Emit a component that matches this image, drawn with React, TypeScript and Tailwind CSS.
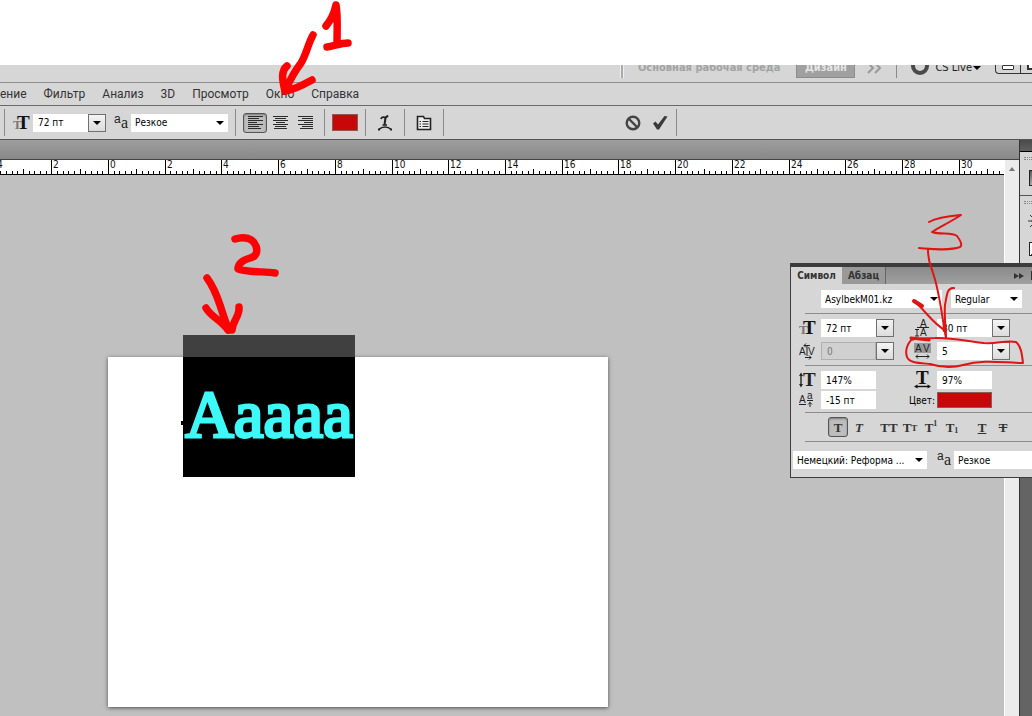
import type { ReactNode } from "react";
import clsx from "clsx";

const UI_FONT = "font-['DejaVu_Sans_Condensed','DejaVu_Sans',sans-serif]";

const menuItems = ["ение", "Фильтр", "Анализ", "3D", "Просмотр", "Окно", "Справка"];

// Distance between two whole units on the ruler
const UNIT = 28.36;
const RULER_ZERO = 108;

function Serif({
  x,
  y,
  size,
  children,
  fill = "#222",
  weight = 700,
}: {
  x: number;
  y: number;
  size: number;
  children: string;
  fill?: string;
  weight?: number;
}) {
  return (
    <text x={x} y={y} fontSize={size} fontWeight={weight} fill={fill} fontFamily="Liberation Serif, serif">
      {children}
    </text>
  );
}

function Sans({ x, y, size, children }: { x: number; y: number; size: number; children: string }) {
  return (
    <text x={x} y={y} fontSize={size} fill="#222" fontFamily="Liberation Sans, sans-serif">
      {children}
    </text>
  );
}

function Glyph({ children, w = 17 }: { children: ReactNode; w?: number }) {
  return (
    <svg width={w} height="18" viewBox={`0 0 ${w} 18`} fill="none" className="shrink-0" aria-hidden="true">
      {children}
    </svg>
  );
}

function SizeGlyph() {
  return (
    <Glyph>
      <Serif x={0} y={15} size={13} fill="#777">T</Serif>
      <Serif x={4} y={15} size={19} fill="#111">T</Serif>
    </Glyph>
  );
}

function AntialiasGlyph() {
  return (
    <Glyph w={15}>
      <Sans x={0} y={9} size={12}>a</Sans>
      <Serif x={7} y={14} size={16} weight={400}>a</Serif>
    </Glyph>
  );
}

function Arrow() {
  return (
    <svg width="8" height="4" viewBox="0 0 8 4" aria-hidden="true">
      <path d="M0 0h8L4 4z" fill="#000" />
    </svg>
  );
}

function Combo({ label, value, disabled = false }: { label: string; value: string; disabled?: boolean }) {
  return (
    <div className="flex h-[18px] w-[73px]">
      <input
        aria-label={label}
        defaultValue={value}
        disabled={disabled}
        className={clsx(
          "min-w-0 flex-1 px-[5px] text-[10px]",
          disabled ? "border border-[#b0b0b0] bg-[#d0d0d0] text-[#777]" : "bg-white text-black",
        )}
      />
      <button
        type="button"
        aria-label={`${label}: список`}
        className="flex w-[18px] items-center justify-center border border-[#707070] bg-linear-to-b from-[#f4f4f4] to-[#dcdcdc]"
      >
        <Arrow />
      </button>
    </div>
  );
}

function Field({ label, value }: { label: string; value: string }) {
  return (
    <input
      aria-label={label}
      defaultValue={value}
      className="h-[18px] w-[55px] bg-white px-[5px] text-[10px] text-black"
    />
  );
}

function Select({ label, value, className }: { label: string; value: string; className: string }) {
  return (
    <div className={clsx("relative h-[18px] shrink-0 bg-white", className)}>
      <select
        aria-label={label}
        className="block h-full w-full appearance-none bg-transparent pl-1 text-[10px] text-black"
      >
        <option>{value}</option>
      </select>
      <span className="pointer-events-none absolute inset-y-0 right-1 flex items-center">
        <Arrow />
      </span>
    </div>
  );
}

function Separator() {
  return <span className="mx-[7px] h-[27px] w-px shrink-0 bg-[#8a8a8a]" />;
}

function ToolButton({ label, pressed = false, children }: { label: string; pressed?: boolean; children: ReactNode }) {
  return (
    <button
      type="button"
      aria-label={label}
      aria-pressed={pressed}
      className={clsx(
        "flex h-5 w-6 shrink-0 items-center justify-center rounded-[3px]",
        pressed && "border border-[#555] bg-[#bdbdbd] shadow-[inset_0_1px_2px_rgba(0,0,0,0.35)]",
      )}
    >
      {children}
    </button>
  );
}

function AlignLines({ align }: { align: "left" | "center" | "right" }) {
  const widths = [15, 11, 15, 9, 15, 11, 13];
  return (
    <svg width="15" height="14" viewBox="0 0 15 14" aria-hidden="true">
      {widths.map((w, i) => {
        const x = align === "left" ? 0 : align === "right" ? 15 - w : (15 - w) / 2;
        return <rect key={i} x={x} y={i * 2} width={w} height="1" fill="#2a2a2a" />;
      })}
    </svg>
  );
}

function ApplicationBar() {
  return (
    <div className="flex h-[17px] items-end justify-end overflow-hidden bg-[#d6d6d6] text-[11px]">
      <span className="mr-[14px] mb-1 h-6 w-[4px] border-x border-[#efefef] bg-[#aaa]" />
      <button type="button" className="mb-1 h-6 leading-[28px] font-bold whitespace-nowrap text-[#a3a3a3]">
        Основная рабочая среда
      </button>
      <button
        type="button"
        className="mb-1 ml-4 h-6 w-[59px] border border-[#8c8c8c] bg-[#a0a0a0] leading-[26px] font-bold text-[#e4e4e4]"
      >
        Дизайн
      </button>
      <button type="button" aria-label="Другие среды" className="mb-1 ml-3 h-6 pt-1">
        <svg width="15" height="14" viewBox="0 0 15 14" fill="none" stroke="#9a9a9a" strokeWidth="2">
          <path d="M1 2l5 5-5 5M8 2l5 5-5 5" />
        </svg>
      </button>
      <span className="mx-[14px] mb-1 h-6 w-px bg-[#8a8a8a]" />
      <button type="button" className="mb-1 flex h-6 items-center gap-[6px] pt-1 text-[#222]">
        <svg width="18" height="22" viewBox="0 0 18 22" fill="none" aria-hidden="true">
          <circle cx="9" cy="9" r="7" stroke="#4a4a4a" strokeWidth="4" />
        </svg>
        <span className="flex items-center gap-px whitespace-nowrap">
          CS Live
          <Arrow />
        </span>
      </button>
      <div className="mb-2 ml-[14px] flex h-6 w-[37px] shrink-0 overflow-hidden rounded-bl border border-r-0 border-[#333]">
        <button type="button" aria-label="Свернуть" className="flex w-[25px] shrink-0 items-end justify-center border-r border-[#333] pb-[3px]">
          <span className="h-[5px] w-3 rounded-[1px] border border-[#333] bg-white" />
        </button>
        <button type="button" aria-label="Развернуть" className="flex w-[25px] shrink-0 items-end pb-[3px] pl-[6px]">
          <span className="h-[9px] w-3 border-2 border-[#333] bg-white" />
        </button>
      </div>
    </div>
  );
}

function OptionsBar() {
  return (
    <div className="flex h-[33px] items-center overflow-hidden bg-[#d6d6d6] pl-1">
      <span className="mr-2 h-[27px] w-px shrink-0 bg-[#8a8a8a]" />
      <SizeGlyph />
      <div className="ml-[3px] shrink-0">
        <Combo label="Кегль" value="72 пт" />
      </div>
      <div className="mr-[2px] ml-2">
        <AntialiasGlyph />
      </div>
      <Select label="Сглаживание" value="Резкое" className="w-[97px]" />
      <Separator />
      <div className="flex gap-px">
        <ToolButton label="По левому краю" pressed>
          <AlignLines align="left" />
        </ToolButton>
        <ToolButton label="По центру">
          <AlignLines align="center" />
        </ToolButton>
        <ToolButton label="По правому краю">
          <AlignLines align="right" />
        </ToolButton>
      </div>
      <Separator />
      <button
        type="button"
        aria-label="Цвет текста"
        className="h-[17px] w-[26px] shrink-0 border border-[#8a5a5a] bg-[#c80808]"
      />
      <Separator />
      <ToolButton label="Деформация текста">
        <svg width="16" height="18" viewBox="0 0 16 18" fill="none" stroke="#222" aria-hidden="true">
          <path d="M4 5C5 2.500 6 3 8 3.500C10 3.500 10.500 2 11 1.500" strokeWidth="2" />
          <path d="M8.500 3.500L7.500 11" strokeWidth="2" />
          <path d="M5.500 11h4.500" strokeWidth="1.500" />
          <path d="M2 15.500C5 12 11 12 14 15.500" strokeWidth="1.500" />
          <path d="M1 14.500h2v2h-2zM13 14.500h2v2h-2z" fill="#222" stroke="none" />
        </svg>
      </ToolButton>
      <Separator />
      <ToolButton label="Палитры">
        <svg width="16" height="16" viewBox="0 0 16 16" fill="none" stroke="#222" aria-hidden="true">
          <path d="M1.500 1.500h6l1 2h6v11h-13z" fill="#eee" strokeWidth="1.600" />
          <path d="M3.500 6.500h1.500M3.500 9h1.500M3.500 11.500h1.500M6.500 6.500h6M6.500 9h6M6.500 11.500h6" />
        </svg>
      </ToolButton>
      <Separator />
      <div className="ml-[170px] flex gap-[3px]">
        <ToolButton label="Отменить">
          <svg width="16" height="16" viewBox="0 0 16 16" fill="none" stroke="#444" strokeWidth="2.400" aria-hidden="true">
            <circle cx="8" cy="8" r="6.300" />
            <path d="M3.500 3.500l9 9" />
          </svg>
        </ToolButton>
        <ToolButton label="Применить">
          <svg width="16" height="16" viewBox="0 0 16 16" fill="#3a3a3a" aria-hidden="true">
            <path d="M1 8.500L3.500 6.500L6 9.500L12.500 1L15.500 1.500L7 14.500H5z" />
          </svg>
        </ToolButton>
      </div>
      <span className="ml-1 h-[27px] w-px shrink-0 bg-[#8a8a8a]" />
    </div>
  );
}

function Ruler() {
  const ticks = Array.from({ length: 360 }, (_, i) => i - 20);
  return (
    <svg width="100%" height="15" className="block border-b border-black bg-white" aria-hidden="true">
      {ticks.map((t) => {
        const x = Math.round(RULER_ZERO + (t * UNIT) / 5);
        const major = t % 10 === 0;
        const height = major ? 15 : t % 5 === 0 ? 5 : 3;
        return (
          <g key={t}>
            <rect x={x} y={14 - height} width="1" height={height} fill="#000" />
            {major && (
              <text x={x + 2} y="8" fontSize="10" fill="#111" fontFamily="DejaVu Sans Condensed, DejaVu Sans, sans-serif">
                {Math.abs(t / 5)}
              </text>
            )}
          </g>
        );
      })}
    </svg>
  );
}

function Artboard() {
  return (
    <div className="pt-[182px] pl-[108px]">
      <div className="relative h-[350px] w-[500px] bg-white shadow-[0_1px_4px_rgba(0,0,0,0.6)]">
        {/* selected type layer, sticking out over the top edge of the page */}
        <div className="absolute -top-[22px] left-[75px] h-[142px] w-[172px] bg-linear-to-b from-[#404040] from-[22px] to-black to-[22px]">
          <p className="pt-11 text-center font-['Liberation_Serif',serif] text-[67px] leading-[70px] text-[#3ff8f8] [-webkit-text-stroke:3px_#3ff8f8]">
            Aaaaa
          </p>
          <span className="absolute top-[86px] -left-[2px] h-1 w-1 bg-black" />
        </div>
      </div>
    </div>
  );
}

function Dock() {
  return (
    <aside className="flex w-[13px] shrink-0 flex-col overflow-hidden border-l border-[#333] bg-[#646464]">
      <div className="h-3 border-b border-black bg-linear-to-b from-[#4a4a4a] to-[#606060]" />
      <div className="h-[44px] border-b border-[#555] bg-[#d6d6d6] pt-[5px] pl-1">
        <div className="h-[3px] border-y border-dotted border-[#888]" />
        <div className="mt-[10px] ml-[5px] h-4 w-4 border border-[#222] bg-linear-to-br from-[#555] to-white" />
      </div>
      <div className="h-[282px] bg-[#d6d6d6] pt-[5px] pl-1">
        <div className="h-[3px] border-y border-dotted border-[#888]" />
        <svg width="16" height="18" viewBox="0 0 16 18" fill="none" stroke="#333" className="mt-2 ml-1" aria-hidden="true">
          <circle cx="8" cy="9" r="4" />
          <path d="M0 9h5M2 3l3 3M2 15l3-3" />
        </svg>
        <div className="mt-3 ml-[5px] h-[14px] w-4 border border-[#222] bg-linear-to-br from-white from-50% to-[#333] to-50%" />
      </div>
    </aside>
  );
}

function Rule() {
  return <div className="ml-[14px] h-px bg-[#8c8c8c]" />;
}

function StyleButton({ label, pressed = false, children }: { label: string; pressed?: boolean; children: ReactNode }) {
  return (
    <button
      type="button"
      aria-label={label}
      aria-pressed={pressed}
      className={clsx(
        "flex h-5 w-5 items-center justify-center rounded-[3px] font-['Liberation_Serif',serif] text-[13px] leading-none font-bold text-[#333]",
        pressed && "border border-[#555] bg-[#bdbdbd] shadow-[inset_0_1px_2px_rgba(0,0,0,0.35)]",
      )}
    >
      {children}
    </button>
  );
}

function CharacterPanel() {
  return (
    <section className="absolute top-[263px] right-0 w-[242px] overflow-hidden border-t-4 border-b border-l border-[#3c3c3c] bg-[#d6d6d6]">
      <div className="flex h-[17px] bg-linear-to-b from-[#8a8a8a] to-[#a0a0a0] text-[10px] font-bold">
        <button type="button" className="w-[51px] bg-[#d6d6d6] text-[#333]">
          Символ
        </button>
        <button type="button" className="w-[44px] border-r border-[#666] bg-[#999] text-[#333]">
          Абзац
        </button>
        <button type="button" aria-label="Свернуть палитру" className="mr-[7px] ml-auto">
          <svg width="10" height="6" viewBox="0 0 10 6" fill="#333" aria-hidden="true">
            <path d="M0 0l5 3-5 3zM5 0l5 3-5 3z" />
          </svg>
        </button>
        <span className="my-1 w-px bg-[#333]" />
      </div>

      <div className="flex gap-[9px] pt-[6px] pb-[5px] pl-[30px]">
        <Select label="Гарнитура" value="AsylbekM01.kz" className="w-[121px]" />
        <Select label="Начертание" value="Regular" className="w-[71px]" />
      </div>
      <Rule />

      <div className="grid grid-cols-[22px_74px_42px_73px] items-center gap-y-[5px] py-[5px] pl-2">
        <SizeGlyph />
        <Combo label="Кегль" value="72 пт" />
        <div className="flex justify-end pr-[6px]">
          <Glyph>
            <Sans x={6} y={8} size={10}>A</Sans>
            <Sans x={6} y={17} size={10}>A</Sans>
            <path d="M3 8.500h12M1 17h4M1 10.500h4M3 10v7" stroke="#222" />
          </Glyph>
        </div>
        <Combo label="Интерлиньяж" value="80 пт" />

        <Glyph>
          <Sans x={0} y={13} size={10}>A</Sans>
          <Sans x={9} y={13} size={10}>V</Sans>
          <path d="M8 4v10M5 3.500h6M7 1.500l-2 2 2 2M6 15.500h6M10 13.500l2 2-2 2" stroke="#222" />
        </Glyph>
        <Combo label="Кернинг" value="0" disabled />
        <div className="flex justify-end pr-[6px]">
          <Glyph>
            <rect width="17" height="10" y="1" fill="#999" />
            <Sans x={1} y={10} size={10}>A</Sans>
            <Sans x={9} y={10} size={10}>V</Sans>
            <path d="M2 14.500h13M4 12.500l-2 2 2 2M13 12.500l2 2-2 2" stroke="#222" />
          </Glyph>
        </div>
        <Combo label="Трекинг" value="5" />
      </div>
      <Rule />

      <div className="grid grid-cols-[22px_74px_42px_73px] items-center gap-y-[2px] pt-[5px] pb-[3px] pl-2">
        <Glyph>
          <path d="M2 3v12" stroke="#222" strokeWidth="1.400" />
          <path d="M2 1.500l2 3.500H0zM2 16.500l2-3.500H0z" fill="#222" />
          <Serif x={4} y={15} size={19}>T</Serif>
        </Glyph>
        <Field label="Масштаб по вертикали" value="147%" />
        <div className="flex justify-end pr-[6px]">
          <Glyph>
            <Serif x={2} y={13} size={19} fill="#111">T</Serif>
            <path d="M2 15.500h13" stroke="#111" strokeWidth="1.400" />
            <path d="M0 15.500l3.500-2v4zM17 15.500l-3.500-2v4z" fill="#111" />
          </Glyph>
        </div>
        <Field label="Масштаб по горизонтали" value="97%" />

        <Glyph>
          <Sans x={0} y={12} size={10}>A</Sans>
          <Sans x={8} y={8} size={10}>a</Sans>
          <path d="M0 13.500h7M8 9.500h6M11 11v5M9 13.500l2-2 2 2" stroke="#222" />
        </Glyph>
        <Field label="Смещение базовой линии" value="-15 пт" />
        <label htmlFor="glyph-color" className="pr-[2px] text-right text-[10px] whitespace-nowrap">
          Цвет:
        </label>
        <button id="glyph-color" type="button" className="h-4 w-[55px] border border-[#8a5a5a] bg-[#c80808]" />
      </div>
      <Rule />

      <div className="flex gap-[10px] pt-1 pb-1 pl-[37px]">
        <div className="flex gap-px">
          <StyleButton label="Полужирный" pressed>
            T
          </StyleButton>
          <StyleButton label="Курсив">
            <i>T</i>
          </StyleButton>
        </div>
        <div className="flex gap-px">
          <StyleButton label="Все прописные">TT</StyleButton>
          <StyleButton label="Капители">
            T<small className="pt-[3px] text-[9px]">T</small>
          </StyleButton>
          <StyleButton label="Надстрочный">
            T<small className="pb-[6px] text-[8px]">1</small>
          </StyleButton>
          <StyleButton label="Подстрочный">
            T<small className="pt-2 text-[8px]">1</small>
          </StyleButton>
        </div>
        <div className="flex gap-px">
          <StyleButton label="Подчеркнутый">
            <u>T</u>
          </StyleButton>
          <StyleButton label="Зачеркнутый">
            <s>T</s>
          </StyleButton>
        </div>
      </div>
      <Rule />

      <div className="flex pt-[9px] pb-2 pl-[2px]">
        <Select label="Язык" value="Немецкий: Реформа ..." className="w-[134px]" />
        <div className="mr-[2px] ml-[10px]">
          <AntialiasGlyph />
        </div>
        <Select label="Сглаживание" value="Резкое" className="w-[97px]" />
      </div>
    </section>
  );
}

// Hand-drawn marker notes over the window
function Notes() {
  return (
    <>
      <svg
        width="360"
        height="340"
        viewBox="0 0 360 340"
        fill="none"
        stroke="#fb0303"
        strokeWidth="7.500"
        strokeLinecap="round"
        strokeLinejoin="round"
        className="pointer-events-none absolute top-0 left-0"
        aria-hidden="true"
      >
        <path d="M326 26C331 20 334 14 336 5C338 16 337 30 337 44M327 47C334 46 341 43 348 43" />
        <path d="M313 35C308 44 306 55 301 63C295 71 290 80 286 89M287 66C281 71 282 79 285 91C293 90 303 85 312 80" />
        <path d="M235 239C244 236 253 238 256 246C258 252 256 257 250 258C243 260 238 264 238 269C250 273 264 271 275 273" />
        <path d="M207 278C213 286 217 296 220 305C223 314 225 322 229 330M206 308C211 317 220 319 228 330M239 307C240 316 233 320 232 330" />
      </svg>
      <svg
        width="127"
        height="170"
        viewBox="905 205 127 170"
        fill="none"
        stroke="#e01414"
        strokeWidth="2"
        strokeLinecap="round"
        strokeLinejoin="round"
        className="pointer-events-none absolute top-[205px] right-0"
        aria-hidden="true"
      >
        <path d="M929 222C938 217 950 216 961 215C952 221 940 227 932 232C941 235 951 232 957 236C960 240 963 245 960 247C950 251 933 249 919 248" />
        <path d="M928 250C928 262 931 266 933 273C940 293 942 318 946 338M915 302C924 309 934 325 945 330M954 288C947 287 947 295 945 305C944 316 946 328 946 337" />
        <path d="M914 301l8 5" strokeWidth="4" />
        <path d="M911 338l18 2" strokeWidth="3" />
        <path d="M911 340C907 345 905 351 907 357C909 363 920 363 930 364C943 368 953 368 963 365C984 359 1004 363 1023 363C1022 354 1021 346 1016 342C1005 340 997 344 984 343C966 341 948 337 935 338C925 338 917 338 911 340" />
      </svg>
    </>
  );
}

export default function App() {
  return (
    <div className={clsx("relative flex min-h-screen flex-col overflow-hidden bg-white pt-[65px]", UI_FONT)}>
      <ApplicationBar />
      <nav className="flex h-6 items-center gap-[17px] overflow-hidden border-y border-t-[#8c8c8c] border-b-[#6a6a6a] bg-[#d6d6d6] font-[Roboto,sans-serif] text-[12px] text-[#333]">
        {menuItems.map((item) => (
          <a key={item} href="#" className="whitespace-nowrap">
            {item}
          </a>
        ))}
      </nav>
      <OptionsBar />
      <div className="flex flex-1 border-t border-[#555]">
        <main className="flex min-w-0 flex-1 flex-col bg-[#c0c0c0]">
          <div className="h-5 border-b border-[#444] bg-linear-to-b from-[#9e9e9e] to-[#888]" />
          <div className="flex flex-1">
            <div className="min-w-0 flex-1">
              <Ruler />
              <Artboard />
            </div>
            <div className="w-[15px] shrink-0 border-l border-white bg-[#ececec] pt-[7px] pl-1">
              <svg width="6" height="4" viewBox="0 0 6 4" aria-hidden="true">
                <path d="M0 4h6L3 0z" fill="#777" />
              </svg>
            </div>
          </div>
        </main>
        <Dock />
      </div>
      <CharacterPanel />
      <Notes />
    </div>
  );
}
